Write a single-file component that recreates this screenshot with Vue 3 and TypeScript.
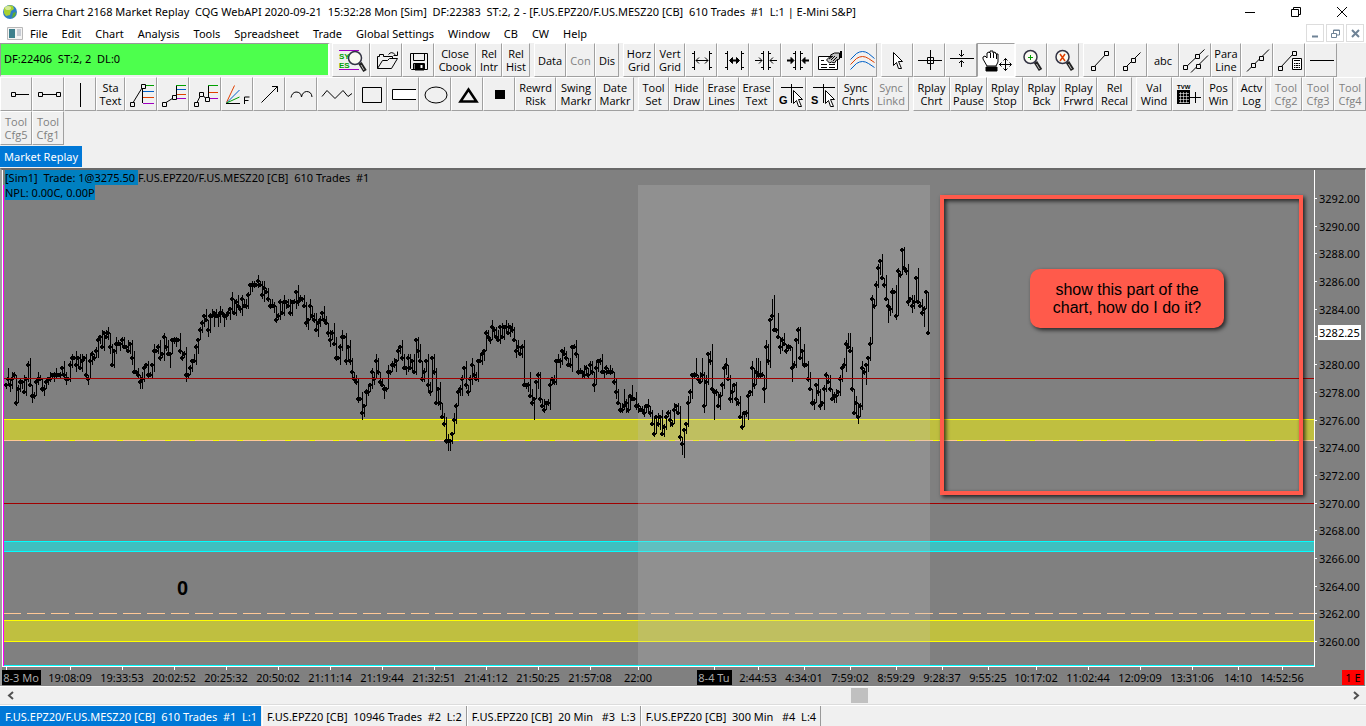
<script setup lang="ts">
interface Shape { d: string; s?: string; f?: string; w?: number }
interface Glyph { t: string; x: number; y: number; size: number; fill?: string }
interface Icon { shapes: Shape[]; texts?: Glyph[] }
interface Tool { w: number; label?: string; icon?: string; off?: boolean; on?: boolean; name?: string }

const GREEN = '#00a000', BLUE = '#0060c8', ORANGE = '#e04000', PURPLE = '#a000c0'
const sq = (x: number, y: number): Shape => ({ d: `M${x - 2} ${y - 2}h4v4h-4z`, f: '#f0f0f0' })
const pointer = (x: number, y: number): Shape => ({
  d: `M${x} ${y}v13l3-3 2 6h3l-3-7h4z`, f: '#fff',
})
const lens = (x: number, y: number): Shape[] => [
  { d: `M${x + 5} ${y + 5}l5 8`, w: 4, s: '#222' },
  { d: `M${x + 6} ${y + 7}l3 5`, w: 1, s: '#bbb' },
  { d: `M${x - 6.5} ${y}a6.5 6.5 0 1 0 13 0a6.5 6.5 0 1 0-13 0`, f: '#fafaf2', s: '#334', w: 1.5 },
]

const icons: Record<string, Icon> = {
  symbols: {
    shapes: [{ d: 'M7 7.5h20M7 26.5h20', s: PURPLE }, ...lens(23, 15)],
    texts: [{ t: 'SY', x: 7, y: 16, size: 8, fill: GREEN }, { t: 'ES', x: 7, y: 25, size: 8, fill: GREEN }],
  },
  open: { shapes: [
    { d: 'M7.5 25.5v-12h2v-2h4v2h9v4' }, { d: 'M7.5 25.5l5-8h5l2-2h8l-6 10z', f: '#f0f0f0' },
    { d: 'M18.5 11.5q3-4 7 .5M27.5 8.5v4h-4' },
  ] },
  save: { shapes: [
    { d: 'M8.5 10.5h17v16h-16l-1-1z' }, { d: 'M11.5 10.5v7h11v-7M11.5 26.5v-6h11v6' },
    { d: 'M13 21h9v6h-9z', f: '#000' }, { d: 'M18.5 22h2v3h-2z', f: '#fff', s: 'none' },
  ] },
  spreadOut: { shapes: [{ d: 'M9.5 8v19M24.5 8v19M7 10.5h2M7 24.5h2M25 10.5h2M25 24.5h2' }, { d: 'M11 17.5h12M14 14.5l-3 3 3 3M20 14.5l3 3-3 3' }] },
  spreadOutBold: { shapes: [{ d: 'M10.5 8v19M24.5 8v19M8 10.5h2M8 24.5h2M25 10.5h2M25 24.5h2' }, { d: 'M13 17.5h9', w: 2 }, { d: 'M15.5 14.5l-3 3 3 3zM19.5 14.5l3 3-3 3z', f: '#000' }] },
  spreadIn: { shapes: [{ d: 'M14.5 8v19M19.5 8v19M12 10.5h2M12 24.5h2M20 10.5h2M20 24.5h2' }, { d: 'M6 17.5h7M10 14.5l3 3-3 3M28 17.5h-7M24 14.5l-3 3 3 3' }] },
  spreadInBold: { shapes: [{ d: 'M14.5 8v19M19.5 8v19M12 10.5h2M12 24.5h2M20 10.5h2M20 24.5h2' }, { d: 'M6 17.5h6M28 17.5h-6', w: 2 }, { d: 'M10 14.5l3 3-3 3zM24 14.5l-3 3 3 3z', f: '#000' }] },
  settings: { shapes: [
    { d: 'M5.5 13.5h19v13h-19z', f: '#fff' }, { d: 'M8 21.5h6M16 21.5h6M8 24.5h6M16 24.5h6M8 17.5h3' },
    { d: 'M13.5 17l3-3h2l-1-2 4-2h5v6l-3 1-2 3-3-1-2 1z', f: '#c4c4c4' }, { d: 'M16 16l4-3M18 17l4-4M20 18l4-4' }, { d: 'M28 8v7', w: 2 },
  ] },
  bands: { shapes: [
    { d: 'M5.5 16.5l6-6q6-4 12 0l6 5', s: BLUE }, { d: 'M5.5 21.5l6-6q6-4 12 0l6 4', s: ORANGE },
    { d: 'M5.5 26.5l6-6q6-4 12 0l6 4', s: BLUE },
  ] },
  pointer: { shapes: [pointer(12.5, 9.5)] },
  cross: { shapes: [{ d: 'M5 17.5h24M17.5 7v20' }, { d: 'M14.5 14.5h6v6h-6z' }] },
  hline2: { shapes: [{ d: 'M5 15.5h24M16.5 7v6M16.5 24v-6M14 11l2.5 2.5 2.5-2.5M14 20l2.5-2.5 2.5 2.5' }] },
  hand: { shapes: [
    { d: 'M10 23l-4-7v-2l2-1 2 2V10l2-1 1 1V8h3v2l2-1 1 2 2 0v8l-2 4z', f: '#fff' },
    { d: 'M13.5 10v5M16.5 10v5M19.5 11v5' }, { d: 'M9 24h11v4h-11z', f: '#000' },
    { d: 'M22 21.5h12M28.5 15.5v12M26.5 17.5l2-2 2 2M26.5 25.5l2 2 2-2M24.5 19.5l-2 2 2 2M32.5 19.5l2 2-2 2' },
  ] },
  zoomIn: { shapes: [...lens(15.5, 14), { d: 'M13 14.5h5M15.5 12v5', s: GREEN }] },
  zoomOff: { shapes: [...lens(15.5, 14), { d: 'M13 11l5 7M18 11l-5 7', s: ORANGE, w: 1.5 }] },
  seg: { shapes: [{ d: 'M10.5 24.5l13-14' }, sq(10.5, 25.5), sq(23.5, 10.5)] },
  ray: { shapes: [{ d: 'M10.5 24.5l15-15' }, sq(10.5, 25.5), sq(18.5, 17.5)] },
  parallel: { shapes: [{ d: 'M6.5 24.5l19-18M12 29.5l17-17' }, sq(6.5, 24.5), sq(18.5, 13.5), sq(19.5, 23.5)] },
  extended: { shapes: [{ d: 'M6 28.5l22-22' }, sq(12.5, 22.5), sq(20.5, 15.5)] },
  calc: { shapes: [
    { d: 'M7.5 24.5l13-14' }, sq(7.5, 25.5), sq(21.5, 10.5), { d: 'M19.5 15.5h9v11h-9z', f: '#fff' },
    { d: 'M21 17.5h6' }, { d: 'M21 20.5h6M21 22.5h6M21 24.5h6' }, { d: 'M22.5 19v6M25.5 19v6', s: '#fff', w: 0.6 },
  ] },
  hline: { shapes: [{ d: 'M5 17.5h24' }] },
  hray: { shapes: [{ d: 'M14 17.5h15' }, sq(13.5, 17.5)] },
  hseg: { shapes: [{ d: 'M8 17.5h18' }, sq(8.5, 17.5), sq(26.5, 17.5)] },
  vline: { shapes: [{ d: 'M16.5 6v24' }] },
  fib1: { shapes: [
    { d: 'M7.5 26.5l11-18M17.5 9v17' }, { d: 'M18 8.5h11', s: GREEN }, { d: 'M18 14.5h11', s: BLUE },
    { d: 'M18 20.5h11', s: ORANGE }, { d: 'M18 26.5h11', s: PURPLE }, sq(7.5, 27.5), sq(18.5, 9.5),
  ] },
  fib2: { shapes: [
    { d: 'M7.5 26.5l11-7M19.5 9v13' }, { d: 'M19 8.5h10', s: GREEN }, { d: 'M20 12.5h9', s: BLUE },
    { d: 'M20 17.5h9', s: ORANGE }, { d: 'M20 21.5h9', s: PURPLE }, sq(7.5, 27.5), sq(17.5, 20.5),
  ] },
  fib3: { shapes: [
    { d: 'M7.5 26.5l5-10 5 6M19.5 9v13' }, { d: 'M19 8.5h10', s: GREEN },
    { d: 'M20 15.5h9', s: ORANGE }, { d: 'M20 21.5h9', s: PURPLE }, sq(7.5, 27.5), sq(12.5, 17.5), sq(18.5, 22.5),
  ] },
  fan: { shapes: [
    { d: 'M5.5 25.5l8-17', s: ORANGE }, { d: 'M5.5 26l13-13', s: BLUE }, { d: 'M5.5 26l13-6', s: GREEN },
    { d: 'M5 26.5h14' }, { d: 'M23.5 27v-7h5M23.5 23.5h4' },
  ] },
  arrow: { shapes: [{ d: 'M8.5 25.5l16-16M19 9.5h5.5v5.5' }] },
  arcs: { shapes: [{ d: 'M6 20.5q1-5 5-5.5 5 0 5.5 5q1-5 5-5.5 5 0 5.5 5.5' }] },
  zigzag: { shapes: [{ d: 'M5 19.5l5-6 8 8 8-8 5 6 4-3' }] },
  rect: { shapes: [{ d: 'M7.5 10.5h19v15h-19z' }] },
  rectOpen: { shapes: [{ d: 'M5.5 12.5h24v10h-24z', f: '#fff', s: 'none' }, { d: 'M29 12.5h-23.5v10h23.5' }] },
  ellipse: { shapes: [{ d: 'M6 18a11 8 0 1 0 22 0a11 8 0 1 0-22 0' }] },
  triangle: { shapes: [{ d: 'M9.5 24.5l8-12 8 12z', w: 2.5 }] },
  square: { shapes: [{ d: 'M12 13h10v9h-10z', f: '#000', s: 'none' }] },
  globalCursor: { shapes: [{ d: 'M7 10.5h22M17.5 7v19' }, pointer(19.5, 13.5)], texts: [{ t: 'G', x: 5, y: 27, size: 11 }] },
  syncCursor: { shapes: [{ d: 'M7 10.5h22M17.5 7v19' }, pointer(19.5, 13.5)], texts: [{ t: 'S', x: 5, y: 27, size: 11 }] },
  tvw: {
    shapes: [
      { d: 'M5 13h13v14h-13z', f: '#000', s: 'none' }, { d: 'M7 16.5h10M7 19.5h10M7 22.5h10M7 25.5h10M8.5 15v11M11.5 15v11M14.5 15v11', s: '#eee', w: 0.6 },
      { d: 'M18 20.5h11M23.5 15v11' },
    ],
    texts: [{ t: 'TVW', x: 5, y: 12, size: 6 }],
  },
}

const i = (icon: string, name: string, w = 32): Tool => ({ w, icon, name })
const t = (label: string, w: number, off = false): Tool => ({ w, label, off })

const row1: Tool[][] = [
  [i('symbols', 'Find symbol', 38), i('open', 'Open'), i('save', 'Save'), t('Close\nCbook', 42), t('Rel\nIntr', 26), t('Rel\nHist', 28)],
  [t('Data', 32), t('Con', 29, true), t('Dis', 24)],
  [t('Horz\nGrid', 32), t('Vert\nGrid', 30), i('spreadOut', 'Increase bar spacing'), i('spreadOutBold', 'Increase bar spacing more'), i('spreadIn', 'Decrease bar spacing'), i('spreadInBold', 'Decrease bar spacing more'), i('settings', 'Chart settings'), i('bands', 'Studies')],
  [i('pointer', 'Pointer'), i('cross', 'Chart values'), i('hline2', 'Adjust'), { ...i('hand', 'Hand', 38), on: true }, i('zoomIn', 'Zoom in'), i('zoomOff', 'Zoom reset')],
  [i('seg', 'Line'), i('ray', 'Ray'), t('abc', 32), i('parallel', 'Parallel lines'), t('Para\nLine', 30), i('extended', 'Extended line'), i('calc', 'Calculator'), i('hline', 'Horizontal line')],
]
const row2: Tool[][] = [
  [i('hray', 'Horizontal ray'), i('hseg', 'Horizontal segment'), i('vline', 'Vertical line'), t('Sta\nText', 29), i('fib1', 'Retracement'), i('fib2', 'Extension'), i('fib3', 'Projection'), i('fan', 'Fan'), i('arrow', 'Arrow'), i('arcs', 'Arcs'), i('zigzag', 'Zig zag', 38), i('rect', 'Rectangle'), i('rectOpen', 'Extending rectangle'), i('ellipse', 'Ellipse'), i('triangle', 'Triangle'), i('square', 'Marker'), t('Rewrd\nRisk', 41), t('Swing\nMarkr', 40), t('Date\nMarkr', 38)],
  [t('Tool\nSet', 31), t('Hide\nDraw', 35), t('Erase\nLines', 35), t('Erase\nText', 35), i('globalCursor', 'Global cursor'), i('syncCursor', 'Synced cursor'), t('Sync\nChrts', 35), t('Sync\nLinkd', 36, true)],
  [t('Rplay\nChrt', 37), t('Rplay\nPause', 37), t('Rplay\nStop', 36), t('Rplay\nBck', 37), t('Rplay\nFrwrd', 37), t('Rel\nRecal', 35)],
  [t('Val\nWind', 36), i('tvw', 'Trade window'), t('Pos\nWin', 29)],
  [t('Actv\nLog', 29)],
  [t('Tool\nCfg2', 32, true), t('Tool\nCfg3', 32, true), t('Tool\nCfg4', 32, true)],
]
const row3: Tool[][] = [[t('Tool\nCfg5', 32, true), t('Tool\nCfg1', 32, true)]]
const rows = [row1, row2, row3]

const title = 'Sierra Chart 2168 Market Replay  CQG WebAPI 2020-09-21  15:32:28 Mon [Sim]  DF:22383  ST:2, 2 - [F.US.EPZ20/F.US.MESZ20 [CB]  610 Trades  #1  L:1 | E-Mini S&P]'
const status = 'DF:22406  ST:2, 2  DL:0'
const position = '[Sim1]  Trade: 1@3275.50 '
const chartName = 'F.US.EPZ20/F.US.MESZ20 [CB]  610 Trades  #1'
const menus = ['File', 'Edit', 'Chart', 'Analysis', 'Tools', 'Spreadsheet', 'Trade', 'Global Settings', 'Window', 'CB', 'CW', 'Help']
const tabs = ['F.US.EPZ20/F.US.MESZ20 [CB]  610 Trades  #1  L:1', 'F.US.EPZ20 [CB]  10946 Trades  #2  L:2', 'F.US.EPZ20 [CB]  20 Min   #3  L:3', 'F.US.EPZ20 [CB]  300 Min   #4  L:4']

// Closing prices in quarter-point ticks relative to 3279.00
const closes: number[] = [
  -2, 0, -2, 0, 1, -7, -3, -1, -1, -4, 0, 4, -2, -5, -5, -1, 0, 0, -3, -3, -1, 0, 0, 1, 1, 1, 1, 1, 3, 1, 0, 0, 4, 6, 6, 4, 6, 3, 5, 6,
  1, 0, 5, 7, 6, 8, 11, 12, 9, 13, 12, 13, 9, 4, 8, 10, 10, 10, 11, 9, 9, 8, 10, 6, 2, 2, 1, -1, 0, 3, 4, 1, 1, 4, 8, 8, 9, 6, 7, 12,
  9, 7, 7, 11, 11, 11, 11, 8, 6, 7, 1, 1, 3, 5, 5, 9, 11, 14, 16, 18, 17, 14, 18, 18, 19, 18, 18, 19, 19, 18, 18, 19, 20, 23, 19, 22, 21,
  20, 23, 21, 21, 24, 27, 27, 27, 27, 28, 27, 24, 26, 25, 23, 21, 21, 21, 17, 18, 22, 19, 22, 22, 21, 19, 22, 22, 25, 22, 23, 23, 21, 16, 17, 21, 18, 17, 14,
  16, 17, 19, 17, 16, 13, 11, 13, 10, 6, 6, 9, 12, 12, 5, 9, 5, 2, 0, -1, -6, -6, -10, -8, -4, -4, -2, 2, 0, 5, 2, -1, -2, -3, -3, 2, 2, 4, 4, 5,
  8, 9, 6, 3, 3, 6, 3, 5, 2, 11, 8, 5, 0, 2, 5, -2, -4, 6, 2, -7, -3, -7, -11, -13, -18, -18, -18, -16, -12, -8, -4, -3, 0, 3, -2, -4, 0, 4, 1, 0, 5,
  5, 7, 8, 13, 12, 11, 15, 14, 12, 11, 15, 12, 15, 15, 13, 15, 14, 11, 8, 9, 7, 9, -2, -2, -2, -5, -7, -6, -1, 1, -6, -8, -9, -7, -7, -2, 0, -1, 5, 5, 5,
  8, 7, 6, 4, 4, 9, 9, 7, 2, 2, 2, 1, 3, 1, 4, 2, -2, 3, 5, 5, 2, 2, 3, 2, 2, 2, -1, -4, -7, -9, -9, -8, -7, -9, -5, -6, -6, -8, -8, -9, -9,
  -10, -8, -8, -10, -13, -16, -11, -13, -11, -16, -14, -11, -10, -12, -13, -9, -8, -10, -17, -19, -15, -13, -7, -4, 1, 1, 1, 0,
  -1, 1, -8, -1, 7, 5, -3, -4, -4, -8, -5, -2, 3, 4, 0, -6, -4, -2, -6, -7, -11, -14, -10, -10, -5, -4, 3, -2, 2, 1, 1, 1, -3, 9, 5, 17, 18, 14, 14, 12,
  9, 11, 10, 8, 9, 9, 3, 4, 11, 14, 6, 8, 4, 4, 0, -3, -7, -7, -2, -4, -8, -7, -3, 1, -1, -3, -6, -5, -5, -4, 0, 3, 4, 10, 9, 8, -3, -10, -7, -11, -8, 3,
  2, 4, 6, 10, 23, 21, 27, 32, 34, 29, 27, 23, 21, 20, 25, 25, 18, 31, 30, 37, 32, 31, 22, 23, 21, 22, 29, 22, 21, 19, 20, 25, 13,
]
// Bars whose wicks reach well past the open-close range: index -> [up, down]
const longWicks: Record<number, [number, number]> = {
  1: [3, 0], 67: [0, 2], 82: [0, 4], 104: [0, 3], 106: [0, 3], 109: [0, 3], 164: [3, 0], 189: [0, 3], 221: [2, 3], 222: [0, 3],
  262: [4, 0], 264: [0, 5], 309: [5, 0], 313: [3, 0], 338: [0, 3], 339: [0, 4], 345: [5, 0], 348: [5, 0], 353: [5, 1], 354: [0, 8],
  375: [4, 0], 376: [4, 1], 377: [4, 1], 379: [0, 4], 383: [5, 0], 384: [6, 0], 386: [5, 0], 393: [0, 4], 421: [3, 0], 422: [4, 0],
  430: [0, 4], 440: [3, 0], 441: [0, 5], 448: [0, 0], 456: [3, 0], 459: [1, 4], 461: [0, 0],
}
const ups = [0, 1, 0, 2, 1, 0, 1, 1, 0, 2, 0, 1, 2]
const downs = [1, 0, 2, 1, 0, 1, 0, 1, 2, 0, 1]
const TICK = 3.465
const BASE = 208.5
const barX = (k: number) => 4 + 2 * k
const barY = (ticks: number) => Math.round(BASE - ticks * TICK)
const wickPath = closes.map((c, k) => {
  const prev = k ? closes[k - 1] : c
  const [u, d] = longWicks[k] ?? [ups[k % ups.length], downs[k % downs.length]]
  return `M${barX(k)} ${barY(Math.max(prev, c) + u)}V${barY(Math.min(prev, c) - d)}h1V${barY(Math.max(prev, c) + u)}z`
}).join('')
const dotPath = closes.map((c, k) => `M${barX(k) - 2} ${barY(c) - 1}h1v-1h2v1h1v2h-1v1h-2v-1h-1z`).join('')

const prices = Array.from({ length: 17 }, (_, n) => 3292 - 2 * n)
const times: [number, string][] = [
  [68, '19:08:09'], [120, '19:33:53'], [172, '20:02:52'], [224, '20:25:32'], [276, '20:50:02'], [328, '21:11:14'], [380, '21:19:44'],
  [432, '21:32:51'], [484, '21:41:12'], [536, '21:50:25'], [588, '21:57:08'], [636, '22:00'], [712, '8-4 Tu'], [756, '2:44:53'], [802, '4:34:01'],
  [848, '7:59:02'], [894, '8:59:29'], [940, '9:28:37'], [986, '9:55:25'], [1034, '10:17:02'], [1086, '11:02:44'], [1138, '12:09:09'],
  [1190, '13:31:06'], [1236, '14:10'], [1280, '14:52:56'],
]
</script>

<template>
  <div class="app">
    <header class="title">
      <svg class="globe" width="16" height="16" viewBox="0 0 16 16" aria-hidden="true">
        <circle cx="8" cy="8" r="7" fill="#2f7fc4" />
        <path d="M2 4q4-4 9-2l1 3-3 2-1 4-4 1-2-3z" fill="#a8d030" />
        <path d="M11 9l3-1-1 4-3 2z" fill="#5fae30" />
        <ellipse cx="6" cy="4" rx="3" ry="2" fill="#fff" opacity=".5" />
      </svg>
      <span class="title-text">{{ title }}</span>
      <div class="win">
        <button aria-label="Minimize"><svg width="12" height="12"><path d="M1 6.500h10" stroke="#000" /></svg></button>
        <button aria-label="Restore"><svg width="12" height="12" fill="none" stroke="#000"><path d="M1.500 3.500h7v7h-7zM3.500 3.500v-2h7v7h-2" /></svg></button>
        <button aria-label="Close"><svg width="12" height="12" stroke="#000"><path d="M1 1l10 10M11 1l-10 10" /></svg></button>
      </div>
    </header>

    <nav class="menu">
      <svg class="doc" width="16" height="13" viewBox="0 0 16 13" aria-hidden="true">
        <path d="M.5.5h15v12h-15z" fill="#f4f4f4" stroke="#b8b8b8" />
        <path d="M2 2h6v9h-6z" fill="#3d7f8c" /><path d="M10 2h4v7h-4z" fill="#c8ccd4" />
      </svg>
      <button v-for="m in menus" :key="m">{{ m }}</button>
      <div class="mdi">
        <button aria-label="Minimize chart"><svg width="9" height="9"><path d="M1 7.500h6" stroke="#6f8396" stroke-width="2" /></svg></button>
        <button aria-label="Restore chart"><svg width="9" height="9" fill="none" stroke="#6f8396"><path d="M.5 4.500h5v4h-5zM2.500 4v-3h6v5h-3M2.500 1.500h6" /></svg></button>
        <button aria-label="Close chart"><svg width="9" height="9" stroke="#6f8396" stroke-width="2"><path d="M1 1l7 7M8 1l-7 7" /></svg></button>
      </div>
    </nav>

    <div v-for="(groups, r) in rows" :key="r" class="bar">
      <div v-if="r === 0" class="status">{{ status }}</div>
      <div v-for="(g, gi) in groups" :key="gi" class="group">
        <button
          v-for="(b, bi) in g" :key="bi" class="tool" :class="{ on: b.on }" :disabled="b.off"
          :aria-label="b.name" :style="{ width: b.w + 'px' }"
        >
          <svg v-if="b.icon" :width="b.w" height="34" fill="none" stroke="#000">
            <path v-for="(p, pi) in icons[b.icon].shapes" :key="pi" :d="p.d" :stroke="p.s ?? '#000'" :fill="p.f ?? 'none'" :stroke-width="p.w ?? 1" />
            <text
              v-for="x in icons[b.icon].texts ?? []" :key="x.t" :x="x.x" :y="x.y" :font-size="x.size"
              :fill="x.fill ?? '#000'" stroke="none" font-weight="700" font-family="Liberation Sans, sans-serif"
            >{{ x.t }}</text>
          </svg>
          <template v-else>{{ b.label }}</template>
        </button>
      </div>
    </div>

    <div class="books"><button class="book">Market Replay</button></div>

    <main class="chart">
      <div class="plot">
        <svg class="canvas" width="100%" height="100%" shape-rendering="crispEdges">
          <rect x="2" y="249" width="100%" height="22" fill="#bfbf40" />
          <rect x="2" y="371" width="100%" height="11" fill="#40bfbf" />
          <rect x="2" y="450" width="100%" height="22" fill="#bfbf40" />
          <g stroke="#ff0">
            <line x1="2" x2="100%" y1="249.500" y2="249.500" /><line x1="2" x2="100%" y1="270.500" y2="270.500" />
            <line x1="2" x2="100%" y1="450.500" y2="450.500" /><line x1="2" x2="100%" y1="471.500" y2="471.500" />
          </g>
          <g stroke="#0ff">
            <line x1="2" x2="100%" y1="371.500" y2="371.500" /><line x1="2" x2="100%" y1="381.500" y2="381.500" />
            <line x1="2" x2="100%" y1="495.500" y2="495.500" />
          </g>
          <g stroke="#ffc896" stroke-dasharray="18 6">
            <line x1="1" x2="100%" y1="270.500" y2="270.500" /><line x1="1" x2="100%" y1="443.500" y2="443.500" />
          </g>
          <line x1="1" x2="100%" y1="333.500" y2="333.500" stroke="#a00000" />
          <rect x="636" y="15" width="292" height="480" fill="#bfbfbf" fill-opacity=".25" />
          <path :d="wickPath" />
          <path :d="dotPath" />
          <line x1="1" x2="100%" y1="208.500" y2="208.500" stroke="#a00000" />
          <line x1="1.500" x2="1.500" y1="15" y2="496" stroke="#f0f" />
        </svg>
        <p class="legend"><span class="pos">{{ position }}</span>{{ chartName }}</p>
        <p class="legend"><span class="pos">NPL: 0.00C, 0.00P</span></p>
        <span class="mark">0</span>
        <div class="region"><p class="callout">show this part of the<br>chart, how do I do it?</p></div>
      </div>
      <div class="scale">
        <div v-for="p in prices" :key="p" class="price">
          <span v-if="p === 3282" class="last">3282.25</span>
          <template v-else>{{ p.toFixed(2) }}</template>
        </div>
      </div>
      <svg class="times" width="100%" height="19">
        <path d="M4.500 0v3" stroke="#fff" />
        <rect x="0" y="3" width="39" height="15" />
        <text x="19" y="15" class="day">8-3 Mo</text>
        <g v-for="[x, label] in times" :key="x">
          <path :d="`M${x + 0.5} 0v3`" stroke="#fff" />
          <rect v-if="label === '8-4 Tu'" :x="x - 17" y="3" width="35" height="15" />
          <text :x="x" y="15" :class="{ day: label === '8-4 Tu' }">{{ label }}</text>
        </g>
      </svg>
      <div class="corner"><span>1 E</span></div>
    </main>

    <div class="scroll">
      <button aria-label="Scroll left"><svg width="7" height="9" fill="none" stroke="#505050" stroke-width="2"><path d="M6 1l-4 3.500 4 3.500" /></svg></button>
      <input type="range" min="0" max="1000" value="635" aria-label="Chart position">
      <button aria-label="Scroll right"><svg width="7" height="9" fill="none" stroke="#505050" stroke-width="2"><path d="M1 1l4 3.500-4 3.500" /></svg></button>
    </div>

    <div class="tabs">
      <button v-for="(tab, n) in tabs" :key="tab" :class="{ current: n === 0 }">{{ tab }}</button>
    </div>
  </div>
</template>

<style>
body { margin: 0; overflow: hidden; }
</style>

<style scoped>
.app {
  display: flex; flex-direction: column; height: 100vh; overflow: hidden;
  background: #f0f0f0; color: #000; font: 11px/15px "Noto Sans", "Open Sans", sans-serif;
}
button { font: inherit; color: inherit; background: none; border: 0; padding: 0; margin: 0; }
.title { display: flex; align-items: center; height: 23px; background: #fff; padding: 0 18px 0 2px; }
.title-text { white-space: pre; margin-left: 5px; flex: 1; }
.globe { flex: none; }
.win { display: flex; gap: 34px; }
.win svg { display: block; }
.menu { display: flex; align-items: center; height: 20px; background: #fff; padding: 0 2px 0 7px; }
.menu > button { padding: 0 7px; }
.mdi { display: flex; gap: 2px; margin-left: auto; }
.mdi button { display: grid; place-items: center; width: 18px; height: 18px; border: 1px solid #ddd; background: #fff; box-sizing: border-box; }
.bar { display: flex; gap: 4px; height: 34px; flex: none; }
.status {
  width: 330px; box-sizing: border-box; background: #4dff4d; border: 1px solid #999; border-right: 2px solid #fff;
  border-bottom: 2px solid #f0f0f0; margin-right: -2px; padding: 7px 3px; white-space: pre;
}
.group { display: flex; }
.tool {
  height: 34px; box-sizing: border-box; border: 1px solid; border-color: #fff #a0a0a0 #a0a0a0 #fff;
  white-space: pre; text-align: center; font-family: "Open Sans", "Noto Sans", sans-serif; line-height: 13px; overflow: hidden;
}
.tool:disabled { color: #808080; }
.tool svg { display: block; margin: -1px; }
.tool.on { background: #f8f8f8; border-color: #a0a0a0 #fff #fff #a0a0a0; }
.books { height: 23px; flex: none; }
.book { background: #0078d7; color: #fff; height: 21px; margin-top: 1px; padding: 0 4px; }
.chart {
  flex: 1; min-height: 0; display: grid; grid-template-columns: 1fr 50px; grid-template-rows: 1fr 19px;
  background: #808080; border-top: 2px solid #696969; border-left: 2px solid #a0a0a0; border-right: 1px solid #e3e3e3;
}
.plot { position: relative; border-right: 1px solid #fff; border-bottom: 1px solid #fff; overflow: hidden; min-height: 0; box-shadow: inset 1px 0 #fff; }
.canvas { position: absolute; inset: 0; }
.legend { position: relative; margin: 0 0 0 3px; white-space: pre; }
.pos { display: inline-block; background: #0080c0; }
.mark { position: absolute; left: 175px; top: 406px; font: 700 20px/24px "Liberation Sans", sans-serif; }
.region {
  position: absolute; left: 938px; top: 25px; width: 355px; height: 292px; border: 4px solid #ff5a4b;
  box-shadow: 2px 2px 4px #000b, inset 2px 2px 4px #000b;
}
.callout {
  position: absolute; left: 86px; top: 70px; width: 194px; box-sizing: border-box; margin: 0; padding: 12px 0 11px; border-radius: 10px;
  background: #ff5a4b; box-shadow: 2px 2px 4px #000b; text-align: center; font: 16px/18px "Liberation Sans", sans-serif;
}
.scale { display: flex; flex-direction: column; justify-content: space-between; padding: 21px 0 18px; }
.price { display: flex; align-items: center; gap: 2px; height: 15px; }
.price::before { content: ""; width: 2px; height: 1px; background: #fff; }
.last { position: relative; top: -4px; background: #fff; margin-left: -1px; padding: 0 1px; }
.times { text-anchor: middle; display: block; }
.times .day { fill: #a8a8a8; }
.corner { display: flex; justify-content: flex-end; padding: 3px 1px 1px 0; }
.corner span { background: #f00; width: 22px; text-align: center; }
.scroll { display: flex; align-items: center; height: 17px; flex: none; border-top: 1px solid #fff; border-bottom: 1px solid #dcdcdc; }
.scroll button { width: 20px; display: grid; place-items: center; }
.scroll input { flex: 1; appearance: none; background: none; margin: 0; height: 16px; min-width: 0; }
.scroll input::-webkit-slider-thumb { appearance: none; width: 17px; height: 15px; background: #c0c0c0; border: 0; border-radius: 0; }
.tabs { display: flex; height: 20px; flex: none; border-top: 1px solid #fff; }
.tabs button { white-space: pre; padding: 0 4px; border-right: 1px solid #999; border-left: 1px solid #fff; height: 20px; }
.tabs .current { background: #0078d7; color: #fff; border-left-color: #0078d7; border-right-color: #f0f0f0; }
</style>
